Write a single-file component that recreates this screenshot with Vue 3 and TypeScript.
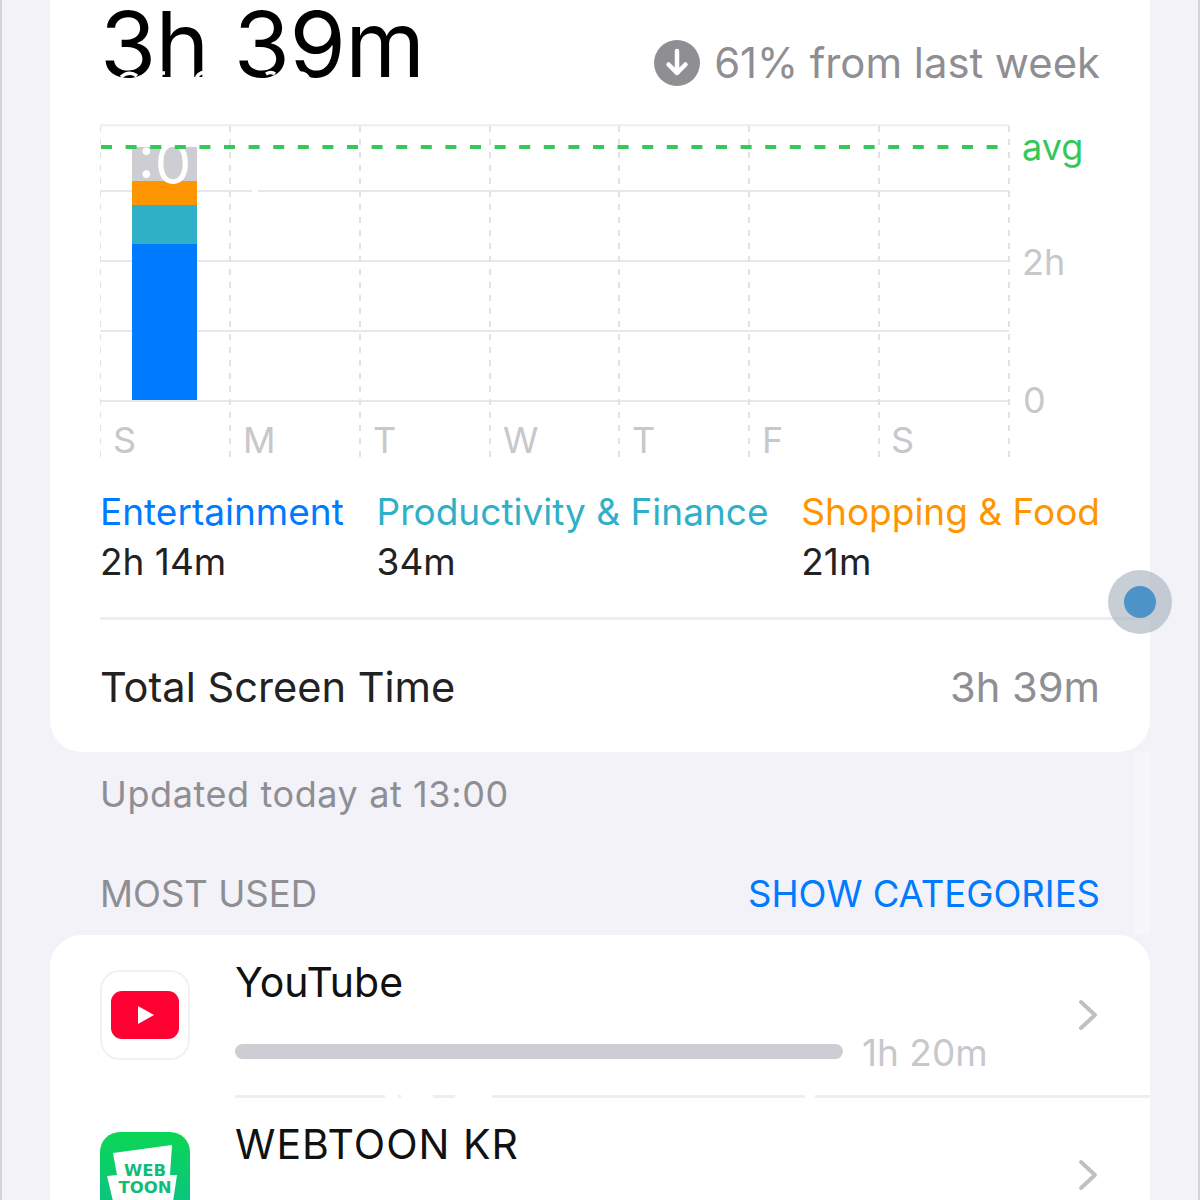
<script setup lang="ts">
interface Legend { name: string; value: string; cls: string }
const legends: Legend[] = [
  { name: 'Entertainment', value: '2h 14m', cls: 'blue' },
  { name: 'Productivity & Finance', value: '34m', cls: 'teal' },
  { name: 'Shopping & Food', value: '21m', cls: 'orange' },
]
const hLines = [191, 261, 331, 401]
const vLines = [100, 230, 360, 490, 619, 749, 879, 1009]
const days = [
  { t: 'S', x: 113 }, { t: 'M', x: 243 }, { t: 'T', x: 373 }, { t: 'W', x: 503 },
  { t: 'T', x: 632 }, { t: 'F', x: 762 }, { t: 'S', x: 891 },
]
</script>

<template>
  <div class="page">
    <section class="card summary">
      <header class="head">
        <h1 class="big">3h 39m</h1>
        <svg class="scratch" width="230" height="30" viewBox="0 0 230 30">
          <path d="M21 17Q29 10 37 16M61 13h4M96 20Q97 13 105 12M166 14Q171 11 175 14M200 13Q207 13 209 20" fill="none" stroke="#fff" stroke-width="3.5" />
        </svg>
        <div class="delta">
          <svg width="46" height="46" viewBox="0 0 46 46">
            <circle cx="23" cy="23" r="23" fill="#8e8e93" />
            <path d="M23 11v22M14.5 24.5 23 33l8.5-8.5" fill="none" stroke="#fff" stroke-width="4.5" stroke-linecap="round" stroke-linejoin="round" />
          </svg>
          <span>61% from last week</span>
        </div>
      </header>

      <div class="chart">
        <svg class="plot" width="1100" height="340" viewBox="100 124 1100 340">
          <line x1="100" y1="125" x2="1009" y2="125" stroke="#f0f0f3" stroke-width="3" />
          <line v-for="y in hLines" :key="y" x1="100" :y1="y" x2="1009" :y2="y" stroke="#e8e8ec" stroke-width="2" />
          <line v-for="x in vLines" :key="x" :x1="x" y1="126" :x2="x" y2="462" stroke="#e2e2e6" stroke-width="2" stroke-dasharray="6 7" />
          <rect x="252" y="189" width="6" height="4" fill="#fff" />
          <rect x="132" y="147" width="65" height="34" fill="#cdcdd3" />
          <rect x="132" y="181" width="65" height="24" fill="#ff9500" />
          <rect x="132" y="205" width="65" height="39" fill="#30b0c7" />
          <rect x="132" y="244" width="65" height="156" fill="#007aff" />
          <text x="138" y="184" class="ghost">:0</text>
          <line x1="101" y1="147" x2="1000" y2="147" stroke="#34c759" stroke-width="4" stroke-dasharray="11 13.6" />
          <text x="1022" y="160" class="avg">avg</text>
          <text x="1022" y="275" class="axis">2h</text>
          <text x="1023" y="413" class="axis">0</text>
          <text v-for="(d, i) in days" :key="i" :x="d.x" y="453" class="axis">{{ d.t }}</text>
        </svg>
      </div>

      <div class="legend">
        <div v-for="l in legends" :key="l.name" class="legend-item">
          <span class="legend-name" :class="l.cls">{{ l.name }}</span>
          <span class="legend-value">{{ l.value }}</span>
        </div>
      </div>

      <div class="rule"></div>

      <div class="total">
        <span>Total Screen Time</span>
        <span class="total-value">3h 39m</span>
      </div>
    </section>

    <div class="band">
      <div class="between">
        <p class="updated">Updated today at 13:00</p>
        <div class="section-head">
          <span class="most">MOST USED</span>
          <span class="show">SHOW CATEGORIES</span>
        </div>
      </div>
    </div>

    <section class="card apps">
      <div class="app first">
        <div class="icon yt">
          <svg width="68" height="48" viewBox="0 0 68 48">
            <rect width="68" height="48" rx="11" fill="#ff0033" />
            <path d="M27 15 43 24 27 33Z" fill="#fff" />
          </svg>
        </div>
        <div class="app-body">
          <div class="app-name">YouTube</div>
          <div class="usage">
            <div class="bar"></div>
            <span class="usage-time">1h 20m</span>
          </div>
        </div>
        <svg class="chev" width="20" height="32" viewBox="0 0 20 32">
          <path d="M3 3 17 16 3 29" fill="none" stroke="#c0c0c4" stroke-width="4" stroke-linecap="round" stroke-linejoin="round" />
        </svg>
      </div>
      <div class="app-rule">
        <i class="gap g1"></i><i class="gap g2"></i><i class="gap g3"></i><i class="gap g4"></i>
      </div>
      <div class="app second">
        <div class="icon wt">
          <svg class="wt-flag" width="90" height="90" viewBox="0 0 90 90">
            <path d="M13 21 72 13 70 43 77 43 70 90 18 90 7 44 17 43Z" fill="#fff" />
          </svg>
          <div class="wt-text"><span>WEB</span><span>TOON</span></div>
        </div>
        <div class="app-body">
          <div class="app-name wide">WEBTOON KR</div>
        </div>
        <svg class="chev" width="20" height="32" viewBox="0 0 20 32">
          <path d="M3 3 17 16 3 29" fill="none" stroke="#c0c0c4" stroke-width="4" stroke-linecap="round" stroke-linejoin="round" />
        </svg>
      </div>
    </section>

    <div class="touch"><div class="touch-dot"></div></div>
  </div>
</template>

<style>
html, body { margin: 0; background: #f2f2f8; }
</style>

<style scoped>
.page {
  position: relative;
  box-sizing: border-box;
  width: 1200px;
  height: 1200px;
  overflow: hidden;
  padding: 0 48px;
  background: #f2f2f8;
  border-left: 2px solid #d2d2d8;
  border-right: 2px solid #d2d2d8;
  font-family: Inter, "Liberation Sans", sans-serif;
  color: #111;
}
.card { background: #fff; }
.summary {
  height: 752px;
  border-radius: 0 0 32px 32px;
  padding-left: 50px;
  box-sizing: border-box;
}
.head {
  position: relative;
  height: 124px;
  padding-right: 50px;
  display: flex;
  justify-content: space-between;
}
.big {
  margin: -2px 0 0;
  font-size: 91px;
  font-weight: 400;
  line-height: 92px;
  letter-spacing: -0.6px;
  color: #000;
}
.scratch { position: absolute; left: 0; top: 60px; }
.delta {
  display: flex;
  align-items: center;
  gap: 14px;
  height: 46px;
  margin-top: 40px;
  font-size: 41.8px;
  color: #8e8e93;
}
.chart { height: 340px; }
.plot { display: block; }
.plot text { font-family: Inter, "Liberation Sans", sans-serif; }
.axis { font-size: 36px; fill: #c7c7cc; }
.avg { font-size: 36px; fill: #34c759; }
.ghost { font-size: 58px; fill: #fff; }
.legend {
  display: flex;
  justify-content: space-between;
  padding: 26px 50px 0 0;
}
.legend-item { display: flex; flex-direction: column; gap: 6px; }
.legend-name { font-size: 37px; line-height: 44px; }
.legend-value { font-size: 37px; line-height: 44px; color: #222; }
.blue { color: #007aff; }
.teal { color: #30b0c7; }
.orange { color: #ff9500; }
.rule { height: 3px; margin-top: 33px; background: #eeeef0; }
.total {
  display: flex;
  justify-content: space-between;
  align-items: center;
  height: 133px;
  padding-right: 50px;
  font-size: 41.6px;
  color: #222;
}
.total-value { color: #8e8e93; }
.band { height: 183px; background: #f6f6fb; }
.between {
  height: 183px;
  margin-right: 15px;
  background: #f2f2f8;
  padding-left: 50px;
  padding-right: 35px;
}
.updated {
  margin: 0;
  padding-top: 20px;
  font-size: 36px;
  line-height: 44px;
  letter-spacing: 0.6px;
  color: #8e8e93;
}
.section-head {
  display: flex;
  justify-content: space-between;
  margin-top: 56px;
  font-size: 36.5px;
  line-height: 44px;
}
.most { color: #8e8e93; }
.show { color: #007aff; }
.apps {
  border-radius: 32px 32px 0 0;
  padding-left: 50px;
  height: 265px;
  box-sizing: border-box;
}
.app { display: flex; position: relative; }
.first { height: 160px; padding-top: 35px; box-sizing: border-box; }
.second { height: 103px; }
.icon {
  flex: none;
  width: 90px;
  height: 90px;
  box-sizing: border-box;
  border-radius: 20px;
  display: flex;
  align-items: center;
  justify-content: center;
}
.yt { border: 2px solid #f1f1f3; }
.wt {
  position: relative;
  margin-top: 34px;
  background: linear-gradient(#0bd655, #0bbf8c);
}
.wt-flag { position: absolute; left: 0; top: 0; }
.wt-text {
  position: relative;
  margin-top: 4px;
  display: flex;
  flex-direction: column;
  align-items: center;
  font-family: "DejaVu Sans", sans-serif;
  font-weight: 700;
  font-size: 16.5px;
  line-height: 17px;
  color: #10bd78;
}
.app-body { margin-left: 45px; flex: 1; min-width: 0; }
.app-name { font-size: 41px; line-height: 48px; color: #111; }
.wide { letter-spacing: 1px; }
.first .app-name { margin-top: -12px; }
.second .app-name { margin-top: 22px; }
.usage { display: flex; align-items: center; gap: 19px; margin-top: 25px; }
.bar { width: 608px; height: 15px; border-radius: 8px; background: #cdcdd3; }
.usage-time { font-size: 37px; line-height: 40px; color: #c7c7cc; transform: translateY(2px); }
.chev { position: absolute; right: 52px; }
.first .chev { top: 64px; }
.second .chev { top: 61px; }
.app-rule {
  position: relative;
  height: 3px;
  margin-left: 135px;
  background: #eeeef0;
}
.gap { position: absolute; top: 0; height: 3px; background: #fff; }
.g1 { left: 150px; width: 13px; }
.g2 { left: 166px; width: 32px; }
.g3 { left: 220px; width: 37px; }
.g4 { left: 570px; width: 10px; }
.touch {
  position: absolute;
  left: 1106px;
  top: 570px;
  width: 64px;
  height: 64px;
  border-radius: 50%;
  background: rgba(170, 180, 190, 0.65);
  display: flex;
  align-items: center;
  justify-content: center;
}
.touch-dot { width: 32px; height: 32px; border-radius: 50%; background: #4c94c8; }
</style>
